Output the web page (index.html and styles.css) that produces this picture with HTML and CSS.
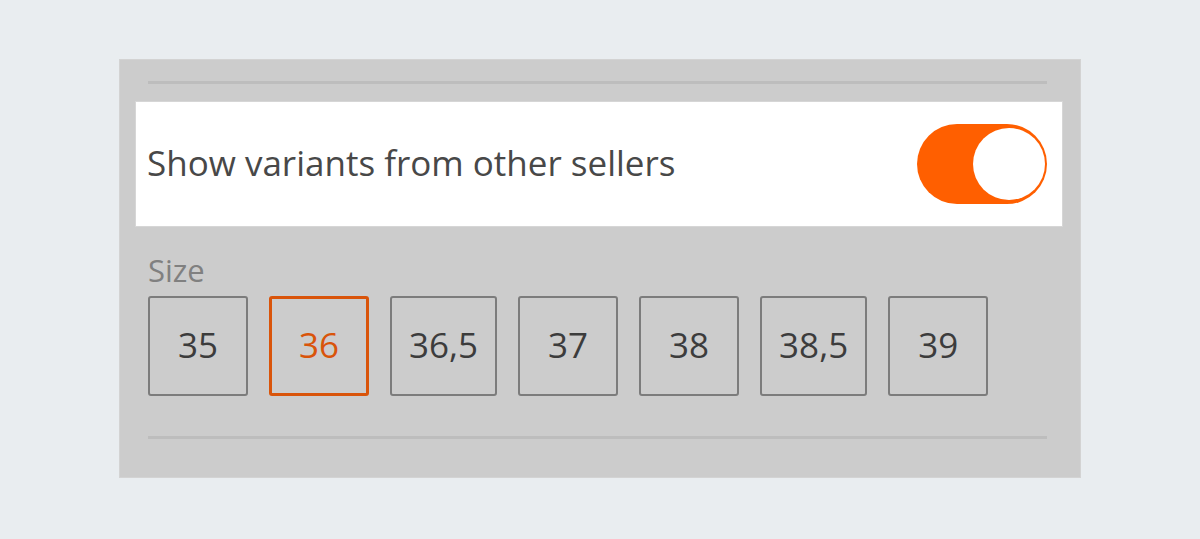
FILE: index.html
```html
<!DOCTYPE html>
<html lang="en">
<head>
  <meta charset="UTF-8" />
  <title>Variant filter</title>
  <link rel="stylesheet" href="styles.css">
</head>
<body>
  <div class="panel">
    <div class="rule"></div>
    <div class="seller-row">
      <span class="seller-label">Show variants from other sellers</span>
      <span class="toggle on"><span class="knob"></span></span>
    </div>
    <div class="size-block">
      <div class="size-title">Size</div>
      <div class="sizes">
        <button class="size">35</button>
        <button class="size active">36</button>
        <button class="size">36,5</button>
        <button class="size">37</button>
        <button class="size">38</button>
        <button class="size">38,5</button>
        <button class="size">39</button>
      </div>
    </div>
    <div class="rule"></div>
  </div>
</body>
</html>
```

FILE: styles.css
```css
body {
  margin: 0;
  background-color: #e9edf0;
  font-family: "Open Sans", Arial, sans-serif;
}
.panel {
  box-sizing: border-box;
  width: 962px;
  height: 419px;
  margin: 59px 0 0 119px;
  padding-top: 21px;
  background-color: #cccccc;
  border: 1px solid #d3d3d3;
}
.rule {
  height: 3px;
  margin: 0 33px 0 28px;
  background-color: #bdbdbd;
}
.seller-row {
  box-sizing: border-box;
  display: flex;
  align-items: center;
  justify-content: space-between;
  height: 126px;
  margin: 17px 17px 0 15px;
  padding: 0 15px 4px 11px;
  background-color: #ffffff;
  border: 1px solid #d6d6d6;
}
.seller-label {
  font-size: 35px;
  color: #484848;
}
.toggle {
  box-sizing: border-box;
  display: flex;
  justify-content: flex-end;
  align-items: center;
  width: 130px;
  height: 80px;
  margin-top: 4px;
  padding: 0 2px;
  border-radius: 40px;
  background-color: #ff5f00;
}
.knob {
  width: 72px;
  height: 72px;
  border-radius: 50%;
  background-color: #ffffff;
}
.size-block {
  padding: 25px 0 40px 28px;
}
.size-title {
  font-size: 31px;
  line-height: 36px;
  color: #808080;
  margin-bottom: 8px;
}
.sizes {
  display: flex;
  gap: 21px;
}
.size {
  box-sizing: border-box;
  min-width: 100px;
  height: 100px;
  padding: 0 17px 4px;
  background: transparent;
  border: 2px solid #7c7c7c;
  border-radius: 3px;
  font-family: inherit;
  font-size: 35px;
  color: #3c3c3c;
}
.size.active {
  border: 3px solid #d9540a;
  color: #d9540a;
}
```
